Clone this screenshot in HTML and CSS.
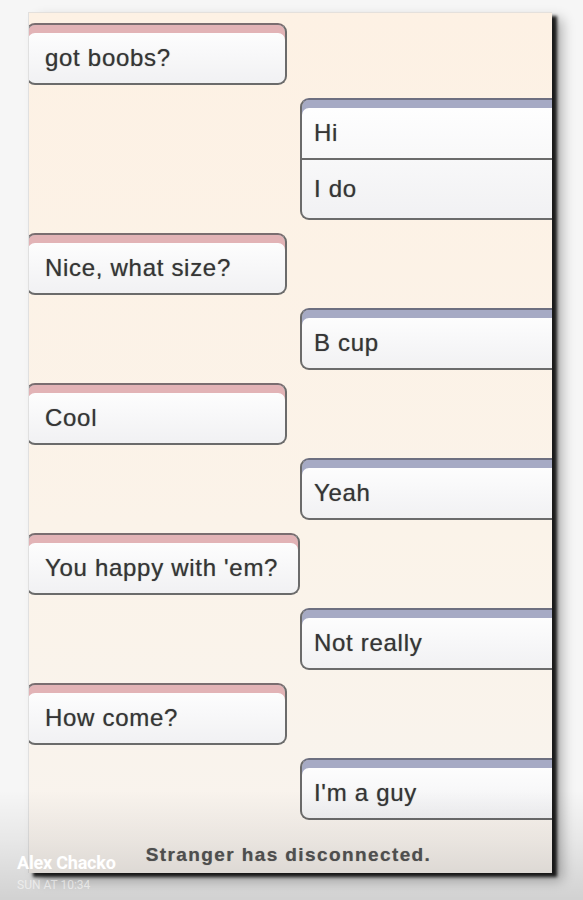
FILE: index.html
```html
<!DOCTYPE html>
<html lang="en">
<head>
    <meta charset="UTF-8">
    <meta name="viewport" content="width=device-width, initial-scale=1.0">
    <title>Stranger chat</title>
    <link rel="stylesheet" href="styles.css">
</head>
<body>
    <div class="photo">
        <div class="chat">
            <div class="msg stranger"><div class="line">got boobs?</div></div>
            <div class="msg you">
                <div class="line">Hi</div>
                <div class="line">I do</div>
            </div>
            <div class="msg stranger"><div class="line">Nice, what size?</div></div>
            <div class="msg you"><div class="line">B cup</div></div>
            <div class="msg stranger"><div class="line">Cool</div></div>
            <div class="msg you"><div class="line">Yeah</div></div>
            <div class="msg stranger wide"><div class="line">You happy with 'em?</div></div>
            <div class="msg you"><div class="line">Not really</div></div>
            <div class="msg stranger"><div class="line">How come?</div></div>
            <div class="msg you"><div class="line">I'm a guy</div></div>
            <p class="status">Stranger has disconnected.</p>
        </div>

        <div class="caption">
            <span class="author">Alex Chacko</span>
            <span class="time">SUN AT 10:34</span>
        </div>
    </div>
</body>
</html>
```

FILE: styles.css
```css
body {
    margin: 0;
    font-family: "Liberation Sans", Arial, sans-serif;
    background-color: #f6f6f6;
}

.photo {
    position: relative;
    height: 900px;
    padding-top: 12px;
    box-sizing: border-box;
    overflow: hidden;
}

.chat {
    margin-left: 28px;
    width: 524px;
    height: 861px;
    box-sizing: border-box;
    padding-top: 10px;
    background: linear-gradient(#fdf1e4, #fbf3e9 60%, #f8f3ee);
    border-top: 1px solid #e4e0dc;
    border-left: 1px solid #e0e0e0;
    box-shadow: 5px 4px 3px rgba(0, 0, 0, 0.85), 10px 7px 12px rgba(0, 0, 0, 0.3);
    display: flex;
    flex-direction: column;
    gap: 13px;
    overflow: hidden;
}

.msg {
    border: 2px solid #6b6b6b;
    border-radius: 9px;
    padding-top: 8px;
    overflow: hidden;
    background: linear-gradient(#ffffff, #f1f1f3);
}

.stranger {
    width: 257px;
    margin-left: -3px;
    border-top-color: #7a6d70;
    box-shadow: inset 0 8px 0 #e2b3b6;
}

.stranger.wide {
    width: 270px;
}

.you {
    margin-left: 271px;
    margin-right: -12px;
    border-top-color: #6d6f80;
    box-shadow: inset 0 8px 0 #a6aac4;
}

.line {
    height: 50px;
    line-height: 50px;
    font-size: 24px;
    color: #353535;
    letter-spacing: 0.7px;
    text-shadow: 0 0 1px rgba(0, 0, 0, 0.45);
}

.stranger .line {
    padding-left: 17px;
}

.you .line {
    padding-left: 12px;
}

.you .line + .line {
    border-top: 2px solid #6b6b6b;
    height: 58px;
    line-height: 58px;
}

.status {
    margin: 11px 0 0 -4px;
    text-align: center;
    font-size: 19px;
    font-weight: bold;
    color: #555555;
    letter-spacing: 1.4px;
    text-shadow: 0 0 1px rgba(0, 0, 0, 0.35);
}

.caption {
    position: absolute;
    left: 0;
    right: 0;
    bottom: 0;
    height: 110px;
    padding: 0 0 8px 17px;
    box-sizing: border-box;
    display: flex;
    flex-direction: column;
    justify-content: flex-end;
    background: linear-gradient(rgba(0, 0, 0, 0), rgba(0, 0, 0, 0.06) 45%, rgba(0, 0, 0, 0.15));
    font-family: Roboto, "Liberation Sans", sans-serif;
}

.author {
    font-size: 18px;
    font-weight: bold;
    color: #ffffff;
    letter-spacing: -0.2px;
}

.time {
    margin-top: 5px;
    font-size: 12px;
    color: rgba(255, 255, 255, 0.55);
}
```
